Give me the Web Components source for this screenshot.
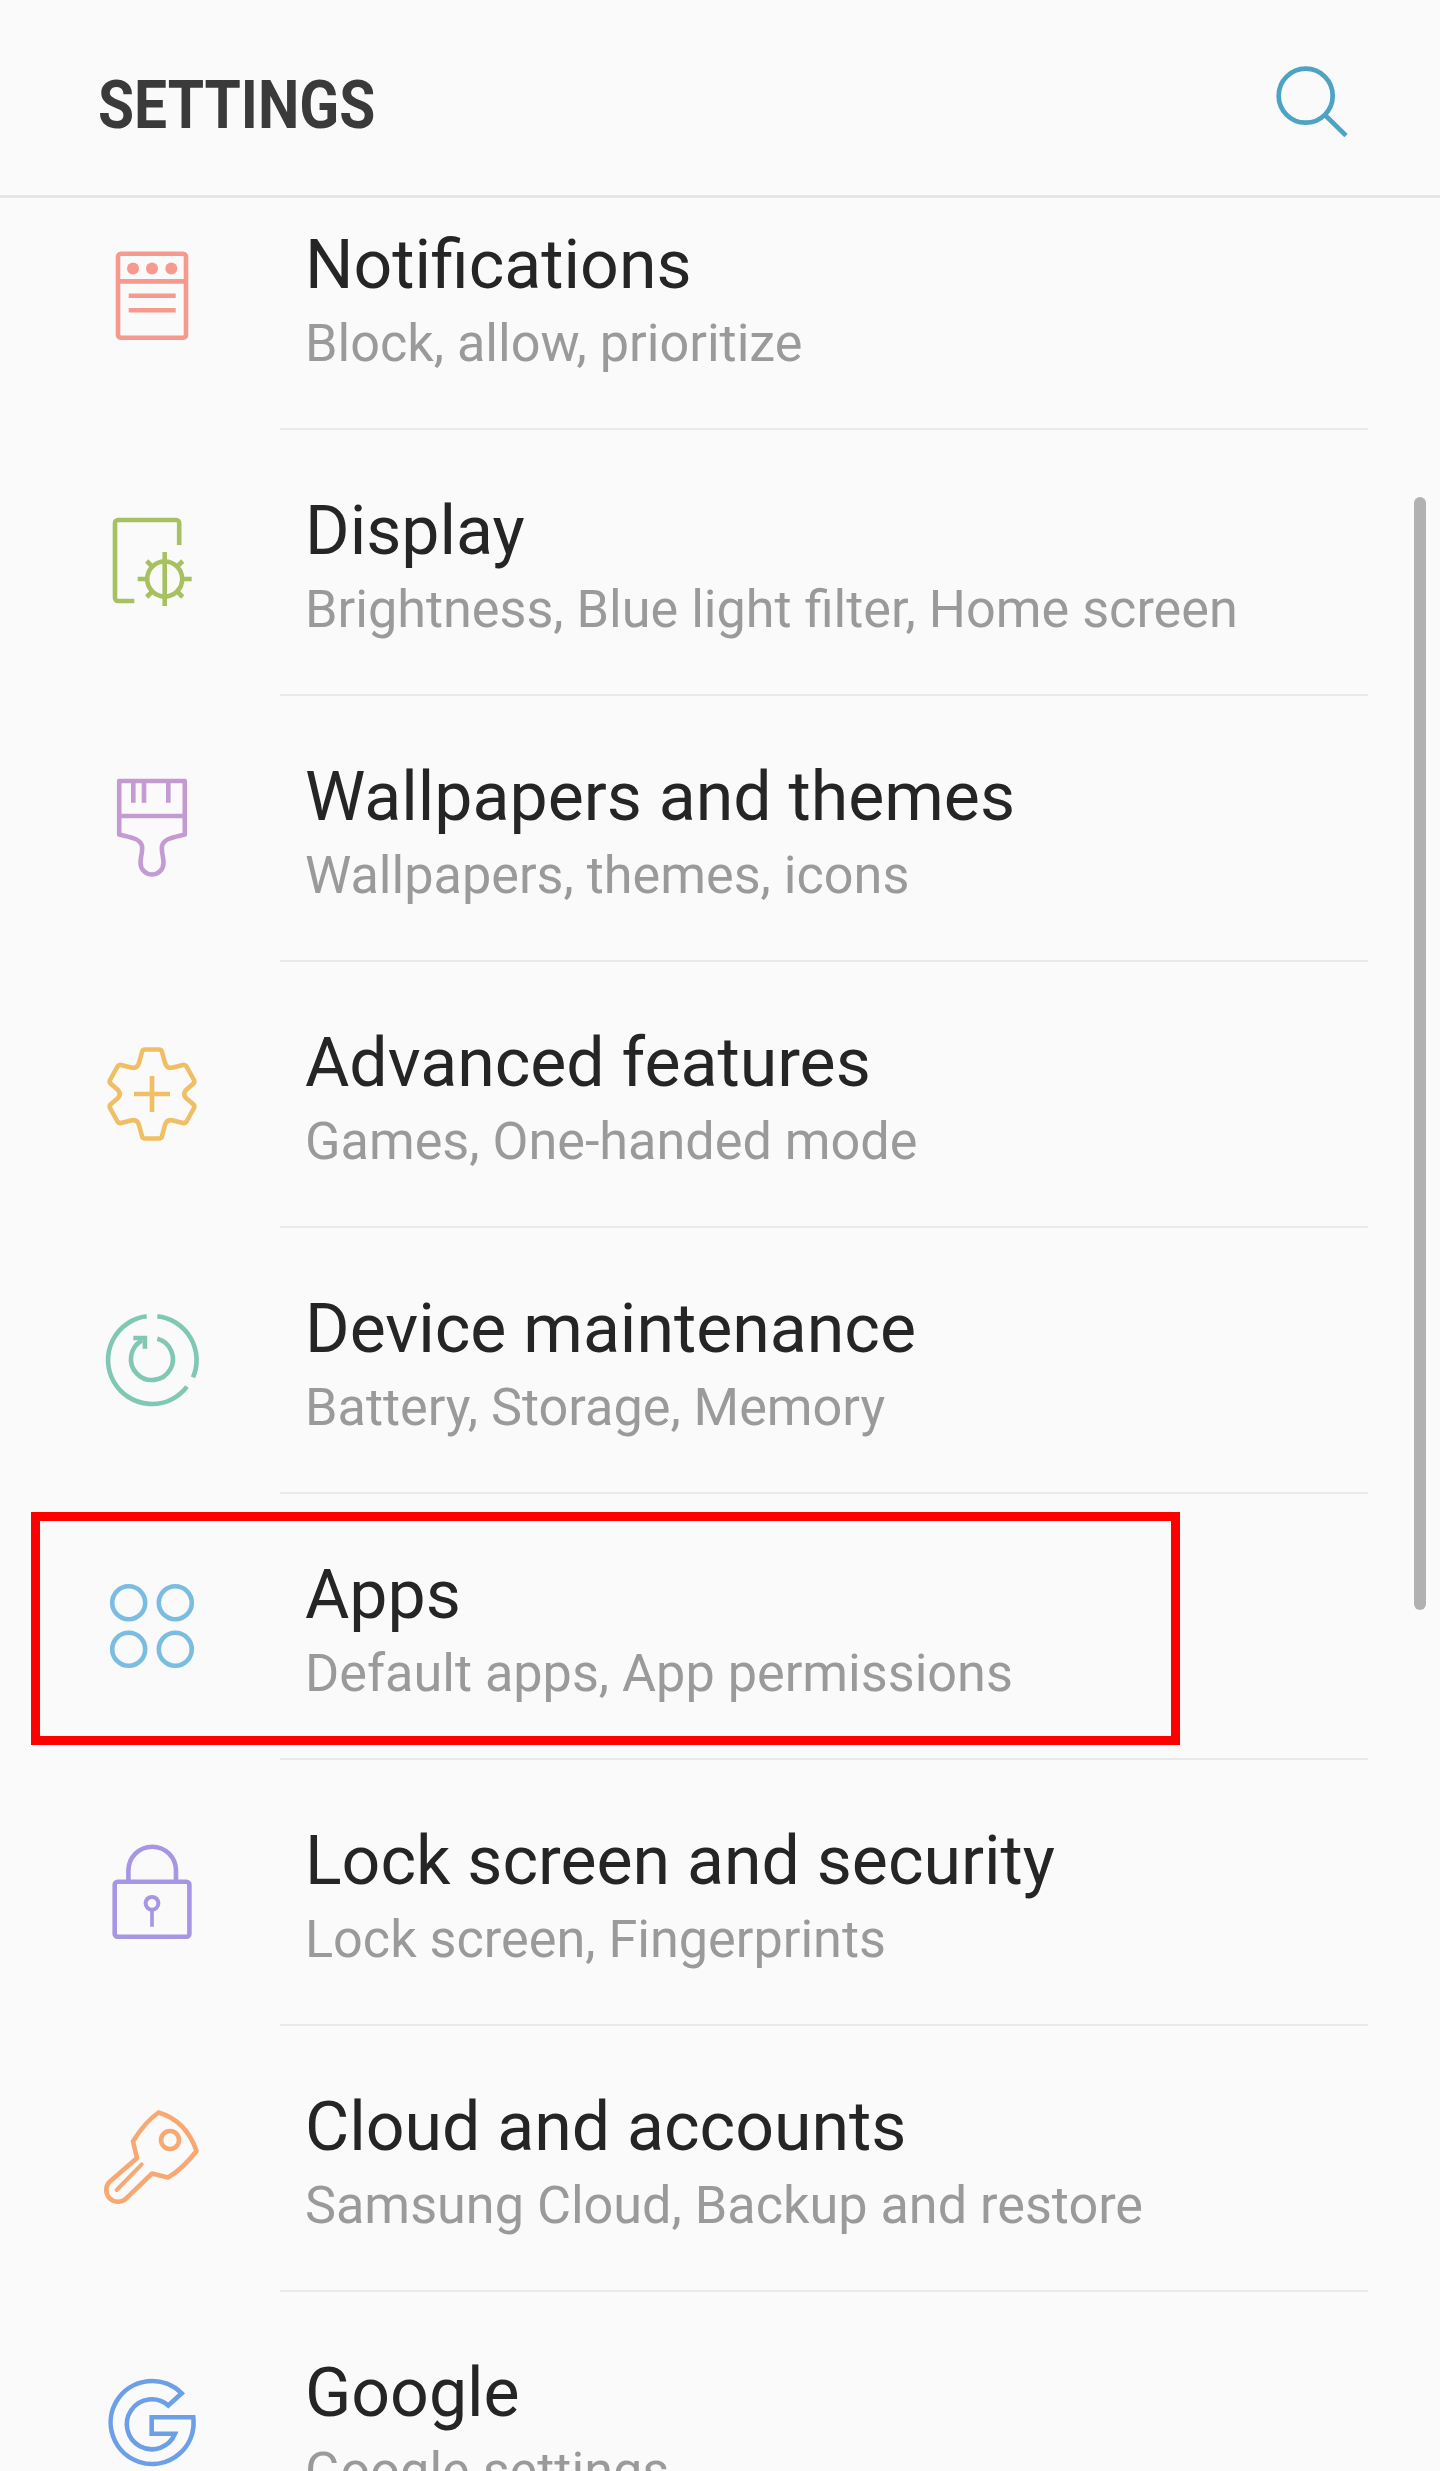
<!DOCTYPE html>
<html lang="en">
<head>
<meta charset="utf-8">
<title>Settings</title>
<style>
html, body {
	margin: 0;
	padding: 0;
	height: 2471px;
	overflow: hidden;
	background: #fafafa;
}
</style>
</head>
<body>
<settings-app>
	<settings-header>SETTINGS</settings-header>
	<settings-list>
		<settings-row icon="notifications">
			Notifications
			<span slot="sub">Block, allow, prioritize</span>
		</settings-row>
		<settings-row icon="display">
			Display
			<span slot="sub">Brightness, Blue light filter, Home screen</span>
		</settings-row>
		<settings-row icon="wallpapers">
			Wallpapers and themes
			<span slot="sub">Wallpapers, themes, icons</span>
		</settings-row>
		<settings-row icon="advanced">
			Advanced features
			<span slot="sub">Games, One-handed mode</span>
		</settings-row>
		<settings-row icon="maintenance">
			Device maintenance
			<span slot="sub">Battery, Storage, Memory</span>
		</settings-row>
		<settings-row icon="apps" highlighted>
			Apps
			<span slot="sub">Default apps, App permissions</span>
		</settings-row>
		<settings-row icon="lock">
			Lock screen and security
			<span slot="sub">Lock screen, Fingerprints</span>
		</settings-row>
		<settings-row icon="cloud">
			Cloud and accounts
			<span slot="sub">Samsung Cloud, Backup and restore</span>
		</settings-row>
		<settings-row icon="google">
			Google
			<span slot="sub">Google settings</span>
		</settings-row>
	</settings-list>
	<settings-scrollbar></settings-scrollbar>
</settings-app>

<script>
// icon drawings, coordinates are a 160 box around the icon, y is the offset of the box
const ICONS = {
	notifications: {
		color: '#f59a8d',
		y: -4,
		body: `
			<rect x="38" y="33.7" width="68" height="84" rx="3"/>
			<path d="M38 61.4H106M48.7 75.7H95.7M48.7 90.3H95.7"/>
			<g class="fill"><circle cx="53" cy="48.4" r="6"/><circle cx="72" cy="48.4" r="6"/><circle cx="91.3" cy="48.4" r="6"/></g>`
	},
	display: {
		color: '#a7c060',
		y: -8,
		body: `
			<path d="M99.2 55V33a3 3 0 0 0-3-3H38a3 3 0 0 0-3 3V108a3 3 0 0 0 3 3H54.3"/>
			<circle cx="84.7" cy="89" r="17.5"/>
			<path d="M84.7 62V116M57.7 89H67M102.4 89H111.7M66.7 71L72.3 76.6M102.7 71L97.1 76.6M66.7 107L72.3 101.4M102.7 107L97.1 101.4"/>`
	},
	wallpapers: {
		color: '#c49ad2',
		y: -2,
		body: `
			<path stroke-linejoin="round" d="M39.2 31H104.8V84.5C95 87 84 88 82 96C81 101 83.5 106 83.5 113A11.5 11.5 0 0 1 60.5 113C60.5 106 63 101 62 96C60 88 49 87 39.2 84.5Z"/>
			<path d="M39.2 66H104.8M53.3 31V52.7M64 31V52.7M88.3 31V52.7"/>`
	},
	advanced: {
		color: '#f0bf65',
		y: -6,
		body: `
			<path stroke-linejoin="round" d="M65 29.5H79Q81.5 29.5 82 32L85 43Q87 49 93 47.5L103 45Q105 44.5 106.5 46.5L114 60Q115 62 113.5 63.5L106 70Q102.5 74 106 78L113.5 84.5Q115 86 114 88L106.5 101.5Q105 103.5 103 103L93 100.5Q87 99 85 105L82 116Q81.5 118.5 79 118.5H65Q62.5 118.5 62 116L59 105Q57 99 51 100.5L41 103Q39 103.5 37.5 101.5L30 88Q29 86 30.5 84.5L38 78Q41.5 74 38 70L30.5 63.5Q29 62 30 60L37.5 46.5Q39 44.5 41 45L51 47.5Q57 49 59 43L62 32Q62.5 29.5 65 29.5Z"/>
			<path d="M54 74H90M72 56V92"/>`
	},
	maintenance: {
		color: '#80c7b4',
		y: 0,
		body: `
			<path d="M77.3 36.3A44 44 0 0 1 113 97.4M107 106.7A44 44 0 1 1 66.7 36.3"/>
			<path d="M77.3 58.7A21 21 0 1 1 62 60.5"/>
			<path d="M53.3 58H64.9V68.7"/>`
	},
	apps: {
		color: '#7bbde0',
		y: -4,
		body: `
			<circle cx="48.7" cy="52.7" r="16.5"/><circle cx="95.3" cy="52.7" r="16.5"/>
			<circle cx="48.7" cy="99.3" r="16.5"/><circle cx="95.3" cy="99.3" r="16.5"/>`
	},
	lock: {
		color: '#a796e3',
		y: -8,
		body: `
			<rect x="34.7" y="61.7" width="74.7" height="55" rx="3"/>
			<path d="M48.4 60V50.5A23.8 23.8 0 0 1 96 50.5V60"/>
			<circle cx="72" cy="83.3" r="6.4" stroke-width="4"/>
			<path d="M72 89V106.7" stroke-width="3.7"/>`
	},
	cloud: {
		color: '#f7a873',
		y: -2,
		body: `
			<path stroke-linejoin="round" d="M78.5 32.5C97 38 110 52 116.5 71C108 82 99 91 88 97.5L72 93.5L46.3 118.3A11.7 11.7 0 0 1 29.7 101.7L57 78L53 61.5C60 50 68 40 78.5 32.5Z"/>
			<path stroke-linecap="round" stroke-width="4" d="M61.7 84.3L36.7 110"/>
			<circle cx="90" cy="60" r="9"/>`
	},
	google: {
		color: '#6b9fe8',
		y: 4,
		body: `
			<path d="M101.7 53.3A41.5 41.5 0 1 0 113.5 86Q113.7 81 113.3 77.3H71.7V93.7H95A25 25 0 1 1 88.3 65.5Z"/>`
	}
};

const iconTemplate = document.createElement('template');
iconTemplate.innerHTML = `
<style>
:host {
	display: block;
	width: 160px;
	height: 160px;
	flex: none;
}
svg {
	display: block;
	fill: none;
	stroke-width: 4.6;
}
.fill {
	fill: currentColor;
	stroke: none;
}
</style>
<svg width="160" height="160"></svg>
`;

class SettingsIcon extends HTMLElement {
	connectedCallback() {
		if (!this.shadowRoot) {
			this.attachShadow({ mode: 'open' });
			this.shadowRoot.appendChild(iconTemplate.content.cloneNode(true));
			const icon = ICONS[this.getAttribute('name')];
			const svg = this.shadowRoot.querySelector('svg');
			svg.setAttribute('viewBox', `0 ${icon.y} 160 160`);
			svg.style.color = icon.color;
			svg.style.stroke = icon.color;
			svg.innerHTML = icon.body;
		}
	}
}

window.customElements.define('settings-icon', SettingsIcon);

const headerTemplate = document.createElement('template');
headerTemplate.innerHTML = `
<style>
:host {
	display: flex;
	justify-content: space-between;
	align-items: flex-start;
	border-bottom: 3px solid #e6e6e6;
	padding: 72px 82px 0 98px;
	height: 123px;
}
.title {
	font: 700 67px/67px Roboto, sans-serif;
	color: #3a3a3a;
	transform: scaleX(0.875);
	transform-origin: left center;
}
svg {
	display: block;
	margin-top: -8px;
	fill: none;
	stroke: #4da3c3;
	stroke-width: 4.7;
}
</style>
<div class="title"><slot></slot></div>
<svg width="84" height="84" viewBox="1274 64 84 84">
	<circle cx="1305.7" cy="95.7" r="27"/>
	<path d="M1325 115L1346 135.7"/>
</svg>
`;

class SettingsHeader extends HTMLElement {
	connectedCallback() {
		if (!this.shadowRoot) {
			this.attachShadow({ mode: 'open' });
			this.shadowRoot.appendChild(headerTemplate.content.cloneNode(true));
		}
	}
}

window.customElements.define('settings-header', SettingsHeader);

const listTemplate = document.createElement('template');
listTemplate.innerHTML = `
<style>
:host {
	display: block;
	height: 2273px;
	overflow: hidden;
}
.rows {
	margin-top: -34px;
}
</style>
<div class="rows"><slot></slot></div>
`;

class SettingsList extends HTMLElement {
	connectedCallback() {
		if (!this.shadowRoot) {
			this.attachShadow({ mode: 'open' });
			this.shadowRoot.appendChild(listTemplate.content.cloneNode(true));
		}
	}
}

window.customElements.define('settings-list', SettingsList);

const rowTemplate = document.createElement('template');
rowTemplate.innerHTML = `
<style>
:host {
	display: block;
	position: relative;
	height: 266px;
}
.row {
	display: flex;
	align-items: center;
	height: 264px;
	padding-left: 80px;
}
.text {
	margin-left: 65px;
	padding-top: 9px;
	display: flex;
	flex-direction: column;
	gap: 19px;
	white-space: nowrap;
}
.title {
	font: 400 68px/67px Roboto, sans-serif;
	color: #252525;
}
.sub {
	font: 400 52.2px/52px Roboto, sans-serif;
	color: #9a9a9a;
}
.line {
	height: 2px;
	margin: 0 72px 0 280px;
	background: #e9e9e9;
}
:host([highlighted])::after {
	content: '';
	position: absolute;
	left: 31px;
	top: 18px;
	width: 1149px;
	height: 233px;
	box-sizing: border-box;
	border: 9px solid #ff0000;
}
</style>
<div class="row">
	<settings-icon></settings-icon>
	<div class="text">
		<div class="title"><slot></slot></div>
		<div class="sub"><slot name="sub"></slot></div>
	</div>
</div>
<div class="line"></div>
`;

class SettingsRow extends HTMLElement {
	connectedCallback() {
		if (!this.shadowRoot) {
			this.attachShadow({ mode: 'open' });
			const content = rowTemplate.content.cloneNode(true);
			content.querySelector('settings-icon').setAttribute('name', this.getAttribute('icon'));
			this.shadowRoot.appendChild(content);
		}
	}
}

window.customElements.define('settings-row', SettingsRow);

const scrollbarTemplate = document.createElement('template');
scrollbarTemplate.innerHTML = `
<style>
:host {
	display: block;
	position: absolute;
	left: 1414px;
	top: 497px;
	width: 12px;
	height: 1113px;
	border-radius: 6px;
	background: #b1b1b1;
}
</style>
`;

class SettingsScrollbar extends HTMLElement {
	connectedCallback() {
		if (!this.shadowRoot) {
			this.attachShadow({ mode: 'open' });
			this.shadowRoot.appendChild(scrollbarTemplate.content.cloneNode(true));
		}
	}
}

window.customElements.define('settings-scrollbar', SettingsScrollbar);

const appTemplate = document.createElement('template');
appTemplate.innerHTML = `
<style>
:host {
	display: block;
	position: relative;
	width: 1440px;
	height: 2471px;
	overflow: hidden;
	background: #fafafa;
}
</style>
<slot></slot>
`;

class SettingsApp extends HTMLElement {
	connectedCallback() {
		if (!this.shadowRoot) {
			this.attachShadow({ mode: 'open' });
			this.shadowRoot.appendChild(appTemplate.content.cloneNode(true));
		}
	}
}

window.customElements.define('settings-app', SettingsApp);
</script>
</body>
</html>
